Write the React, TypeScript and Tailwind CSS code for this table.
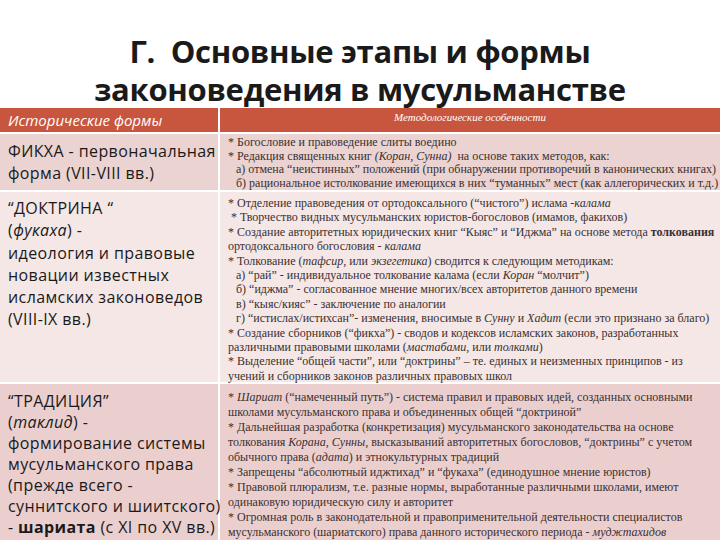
type Line = { indent?: boolean; content: React.ReactNode };

function RightLines({ lines, lh }: { lines: Line[]; lh: string }) {
  return (
    <div className={`font-['Liberation_Serif','Times_New_Roman',serif] text-[12px] text-[#3a3030] ${lh}`}>
      {lines.map((l, i) => (
        <div key={i} className={`whitespace-nowrap ${l.indent ? 'pl-2' : ''}`}>
          {l.content}
        </div>
      ))}
    </div>
  );
}

const row1: Line[] = [
  { content: '* Богословие и правоведение слиты воедино' },
  { content: <>* Редакция священных книг <i>(Коран, Сунна)</i>&nbsp; на основе таких методов, как:</> },
  { indent: true, content: 'а) отмена “неистинных” положений (при обнаружении противоречий в канонических книгах)' },
  { indent: true, content: 'б) рациональное истолкование имеющихся в них “туманных” мест (как аллегорических и т.д.)' },
];

const row2: Line[] = [
  { content: <>* Отделение правоведения от ортодоксального (“чистого”) ислама -<i>калама</i></> },
  { content: <>&nbsp;* Творчество видных мусульманских юристов-богословов (имамов, факихов)</> },
  { content: <>* Создание авторитетных юридических книг “Кыяс” и “Иджма” на основе метода <b>толкования</b></> },
  { content: <>ортодоксального богословия - <i>калама</i></> },
  { content: <>* Толкование (<i>тафсир</i>, или <i>экзегетика</i>) сводится к следующим методикам:</> },
  { indent: true, content: <>а) “рай” - индивидуальное толкование калама (если <i>Коран</i> “молчит”)</> },
  { indent: true, content: 'б) “иджма” - согласованное мнение многих/всех авторитетов данного времени' },
  { indent: true, content: 'в) “кыяс/кияс” - заключение по аналогии' },
  { indent: true, content: <>г) “истислах/истихсан”- изменения, вносимые в <i>Сунну</i> и <i>Хадит</i> (если это признано за благо)</> },
  { content: '* Создание сборников (“фикха”) - сводов и кодексов исламских законов, разработанных' },
  { content: <>различными правовыми школами (<i>мастабами</i>, или <i>толками</i>)</> },
  { content: '* Выделение “общей части”, или “доктрины” – те. единых и неизменных принципов - из' },
  { content: 'учений и сборников законов различных правовых школ' },
];

const row3: Line[] = [
  { content: <>* <i>Шариат</i> (“намеченный путь”) - система правил и правовых идей, созданных основными</> },
  { content: 'школами мусульманского права и объединенных общей “доктриной”' },
  { content: '* Дальнейшая разработка (конкретизация) мусульманского законодательства на основе' },
  { content: <>толкования <i>Корана</i>, <i>Сунны</i>, высказываний авторитетных богословов, “доктрины” с учетом</> },
  { content: <>обычного права (<i>адата</i>) и этнокультурных традиций</> },
  { content: '* Запрещены “абсолютный иджтихад” и “фукаха” (единодушное мнение юристов)' },
  { content: '* Правовой плюрализм, т.е. разные нормы, выработанные различными школами, имеют' },
  { content: 'одинаковую юридическую силу и авторитет' },
  { content: '* Огромная роль в законодательной и правоприменительной деятельности специалистов' },
  { content: <>мусульманского (шариатского) права данного исторического периода - <i>муджтахидов</i></> },
];

export default function App() {
  return (
    <div className="w-[720px] h-[540px] overflow-hidden bg-white font-['Open_Sans',sans-serif]">
      <div className="h-[108px] flex flex-col items-center justify-end text-[31px] leading-[38px] font-bold tracking-[-0.3px] text-[#1a1a1a]">
        <div>Г.&nbsp; Основные этапы и формы</div>
        <div>законоведения в мусульманстве</div>
      </div>

      <div className="grid grid-cols-[218px_1fr] gap-[2px] bg-white text-[#1a1a1a]">
        <div className="h-[24px] bg-[#c8553d] flex items-center pl-2 text-white italic text-[15px]">
          Исторические формы
        </div>
        <div className="h-[24px] bg-[#c8553d] flex justify-center pt-[1px] text-white italic text-[11px] font-['Liberation_Serif',serif]">
          Методологические особенности
        </div>

        <div className="h-[56px] bg-[#ead3d1] pl-2 pt-[6px] text-[16px] leading-[22px] tracking-[0.4px]">
          <div>ФИКХА - первоначальная</div>
          <div>форма (VII-VIII вв.)</div>
        </div>
        <div className="h-[56px] bg-[#ead3d1] pl-[8px] pt-[2px]">
          <RightLines lines={row1} lh="leading-[13.5px]" />
        </div>

        <div className="h-[190px] bg-[#f4e7e6] pl-2 pt-[5px] text-[16px] leading-[22.3px] tracking-[0.4px]">
          <div>“ДОКТРИНА “</div>
          <div>(<i>фукаха</i>) -</div>
          <div>идеология и правовые</div>
          <div>новации известных</div>
          <div>исламских законоведов</div>
          <div>(VIII-IX вв.)</div>
        </div>
        <div className="h-[190px] bg-[#f4e7e6] pl-[8px] pt-[4px]">
          <RightLines lines={row2} lh="leading-[14.4px]" />
        </div>

        <div className="h-[160px] bg-[#ebcfcf] pl-2 pt-[7px] text-[16px] leading-[21px] tracking-[0.4px]">
          <div>“ТРАДИЦИЯ”</div>
          <div>(<i>таклид</i>) -</div>
          <div>формирование системы</div>
          <div>мусульманского права</div>
          <div>(прежде всего -</div>
          <div className="whitespace-nowrap">суннитского и шиитского)</div>
          <div className="whitespace-nowrap">- <b>шариата</b> (с XI по XV вв.)</div>
        </div>
        <div className="h-[160px] bg-[#ebcfcf] pl-[8px] pt-[6px]">
          <RightLines lines={row3} lh="leading-[15px]" />
        </div>
      </div>
    </div>
  );
}
